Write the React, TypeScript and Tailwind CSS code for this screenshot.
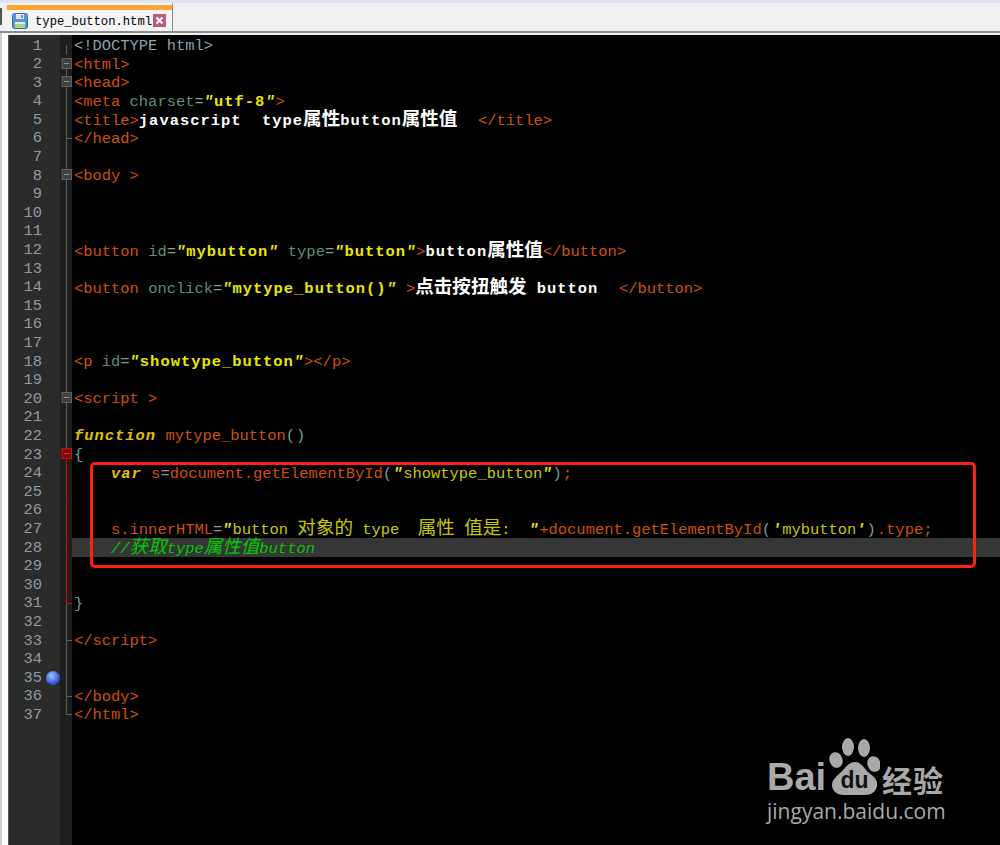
const COLORS = {
  doc: "text-[#8fa3ad]",
  tag: "text-[#d05200]",
  attr: "text-[#5f8f72]",
  eq: "text-[#7f9f8f]",
  val: "text-[#e8e800] font-bold tracking-[1px]",
  quote: "text-[#e8e800] font-bold italic tracking-[1px]",
  txt: "text-white font-bold tracking-[1px]",
  kw: "text-[#e0c000] font-bold italic tracking-[1px]",
  punct: "text-[#6f9f9f] tracking-[1px]",
  str: "text-[#c8c800]",
  cm: "text-[#00c800] italic",
};

type Kind = keyof typeof COLORS;
type Tok = [Kind, string];

const CODE: Record<number, Tok[]> = {
  1: [["doc", "<!DOCTYPE html>"]],
  2: [["tag", "<html>"]],
  3: [["tag", "<head>"]],
  4: [["tag", "<meta "], ["attr", "charset"], ["eq", "="], ["quote", '"'], ["val", "utf-8"], ["quote", '"'], ["tag", ">"]],
  5: [["tag", "<title>"], ["txt", "javascript  type属性button属性值  "], ["tag", "</title>"]],
  6: [["tag", "</head>"]],
  8: [["tag", "<body >"]],
  12: [["tag", "<button "], ["attr", "id"], ["eq", "="], ["quote", '"'], ["val", "mybutton"], ["quote", '"'], ["attr", " type"], ["eq", "="], ["quote", '"'], ["val", "button"], ["quote", '"'], ["tag", ">"], ["txt", "button属性值"], ["tag", "</button>"]],
  14: [["tag", "<button "], ["attr", "onclick"], ["eq", "="], ["quote", '"'], ["val", "mytype_button()"], ["quote", '"'], ["tag", " >"], ["txt", "点击按扭触发 button  "], ["tag", "</button>"]],
  18: [["tag", "<p "], ["attr", "id"], ["eq", "="], ["quote", '"'], ["val", "showtype_button"], ["quote", '"'], ["tag", "></p>"]],
  20: [["tag", "<script >"]],
  22: [["kw", "function"], ["tag", " mytype_button"], ["punct", "()"]],
  23: [["punct", "{"]],
  24: [["tag", "    "], ["kw", "var"], ["tag", " s"], ["eq", "="], ["tag", "document.getElementById"], ["punct", "("], ["quote", '"'], ["str", "showtype_button"], ["quote", '"'], ["punct", ")"], ["tag", ";"]],
  27: [["tag", "    s.innerHTML"], ["eq", "="], ["quote", '"'], ["str", "button 对象的 type  属性 值是:  "], ["quote", '"'], ["tag", "+document.getElementById"], ["punct", "("], ["quote", "'"], ["str", "mybutton"], ["quote", "'"], ["punct", ")"], ["tag", ".type;"]],
  28: [["cm", "    //获取type属性值button"]],
  31: [["punct", "}"]],
  33: [["tag", "</script>"]],
  36: [["tag", "</body>"]],
  37: [["tag", "</html>"]],
};

const LINES = Array.from({ length: 37 }, (_, i) => i + 1);
const CJK_LINES = [5, 12, 14, 27, 28];
const FOLD_BOX = [2, 3, 8, 20];
const FOLD_TICK = [6, 33, 36, 37];

function Run({ kind, text }: { kind: Kind; text: string }) {
  const parts = text.split(/([\u4e00-\u9fff]+)/);
  return (
    <span className={COLORS[kind]}>
      {parts.map((p, i) =>
        i % 2 === 1 ? (
          <span key={i} className="text-[18.54px] leading-[0] tracking-normal font-['Noto_Sans_CJK_SC',sans-serif]">
            {p}
          </span>
        ) : (
          p
        ),
      )}
    </span>
  );
}

function FoldMark({ line }: { line: number }) {
  const red = line >= 23 && line <= 31;
  const c = red ? "#f00000" : "#606060";
  const box = FOLD_BOX.includes(line) || line === 23;
  return (
    <svg viewBox="0 0 12 18.6" className="block h-[18.6px] w-[12px]">
      {line > 2 && <line x1="6.5" y1="0" x2="6.5" y2="9.5" stroke={line === 23 ? "#606060" : c} />}
      {line < 37 && <line x1="6.5" y1="9.3" x2="6.5" y2="18.6" stroke={line === 31 ? "#606060" : c} />}
      {(FOLD_TICK.includes(line) || line === 31) && <line x1="6.5" y1="9.5" x2="12" y2="9.5" stroke={c} />}
      {box && (
        <g>
          <rect x="2" y="3.5" width="9.5" height="10" fill={red ? "#701010" : "#404040"} stroke={c} />
          <line x1="4" y1="8.5" x2="9.5" y2="8.5" stroke={red ? "#ff3030" : "#909090"} />
        </g>
      )}
    </svg>
  );
}

function FloppyIcon() {
  return (
    <svg viewBox="0 0 16 16" className="h-[16px] w-[16px]">
      <rect x="0.5" y="0.5" width="15" height="15" rx="2" fill="#5b93d8" stroke="#3f6fb0" />
      <rect x="4" y="1" width="8" height="5" fill="#dfe9f5" />
      <rect x="9" y="2" width="2" height="3" fill="#5b93d8" />
      <rect x="3" y="9" width="10" height="6" fill="#a6d38c" />
      <rect x="3" y="9" width="10" height="2" fill="#e8f2e0" />
    </svg>
  );
}

function CloseIcon() {
  return (
    <svg viewBox="0 0 13 13" className="ml-[1px] h-[13px] w-[13px]">
      <rect width="13" height="13" fill="#b5607a" />
      <path d="M3.5 3.5l6 6M9.5 3.5l-6 6" stroke="#fff" strokeWidth="2" />
    </svg>
  );
}

function Watermark() {
  return (
    <div className="absolute left-[767px] top-[736px] flex w-[190px] flex-col text-[#a9a9a9]">
      <div className="flex h-[62px]">
        <span className="mt-[21px] w-[61px] text-[38px] leading-[40px] font-bold font-['Liberation_Sans',sans-serif]">Bai</span>
        <svg viewBox="0 0 52 62" className="h-[62px] w-[52px]">
          <ellipse cx="20" cy="11" rx="6" ry="9" fill="#a9a9a9" />
          <ellipse cx="36" cy="12" rx="6" ry="9" fill="#a9a9a9" />
          <ellipse cx="8" cy="24" rx="6.5" ry="8" fill="#a9a9a9" transform="rotate(-20 8 24)" />
          <ellipse cx="46" cy="28" rx="6.5" ry="8" fill="#a9a9a9" transform="rotate(-20 46 28)" />
          <path d="M27 26C34 26 36 33 41 37C47 41 50 45 49 50C48 56 43 59 37 59L16 59C9 59 4 55 4 49C4 44 8 41 12 37C17 33 20 26 27 26Z" fill="#a9a9a9" />
          <text x="26.5" y="52" textAnchor="middle" fontSize="23" fontWeight="700" fontFamily="Liberation Sans" fill="#111">du</text>
        </svg>
        <span className="ml-[2px] mt-[25px] text-[30px] leading-[36px] font-bold tracking-[1px] font-['Noto_Sans_CJK_SC',sans-serif]">经验</span>
      </div>
      <span className="mt-[1px] whitespace-nowrap text-[21px] leading-[24px] font-['Open_Sans',sans-serif]">jingyan.baidu.com</span>
    </div>
  );
}

export default function App() {
  return (
    <div className="relative flex h-[845px] w-[1000px] flex-col overflow-hidden bg-[#f0f0f0] font-['Liberation_Mono',monospace]">
      <div className="h-[3px] bg-[#dfe3f1]" />
      {/* tab bar */}
      <div className="flex h-[30px] border-b-[2px] border-[#8c8c8c]">
        <div className="mt-[5px] h-[17px] w-[2px] bg-[#555]" />
        <div className="ml-[5px] flex h-[28px] w-[166px] flex-col border-r border-[#8c8c8c] bg-[#f4f4f4]">
          <div className="mt-[2px] h-[5px] bg-[#fba534]" />
          <div className="flex flex-1 items-center pl-[5px]">
            <FloppyIcon />
            <span className="ml-[7px] pt-[3px] text-[12.2px] leading-none text-black">type_button.html</span>
            <CloseIcon />
          </div>
        </div>
      </div>
      <div className="flex flex-1">
        <div className="w-[8px] shrink-0 border-l-[2px] border-[#cfcfcf] bg-white" />
        <div className="mt-[2px] flex flex-1 overflow-hidden border-l border-[#555]">
          {/* line numbers */}
          <div className="w-[51px] shrink-0 bg-[#2b2b2b] pt-[1px] text-[15.45px] text-[#8b9ba6]">
            {LINES.map((n) => (
              <div key={n} className="flex h-[18.6px] items-center pt-[1px] leading-[18.6px]">
                <span className="w-[33px] text-right">{n}</span>
                {n === 35 && (
                  <span className="ml-[4px] h-[14px] w-[14px] rounded-full bg-[radial-gradient(circle_at_40%_35%,#a8c4ff,#3358d8_60%,#1c3aa8)]" />
                )}
              </div>
            ))}
          </div>
          {/* fold margin */}
          <div className="w-[12px] shrink-0 bg-[#1f1f1f] pt-[1px]">
            {LINES.map((n) => (
              <FoldMark key={n} line={n} />
            ))}
          </div>
          {/* code */}
          <div className="flex-1 bg-black pt-[1px] text-[15.45px]">
            {LINES.map((n) => (
              <div
                key={n}
                className={`h-[18.6px] whitespace-pre pl-[2px] leading-[18.6px] ${CJK_LINES.includes(n) ? "pt-[2px]" : "pt-[1px]"} ${n === 28 ? "bg-[#363636]" : ""}`}
              >
                {(CODE[n] || []).map(([kind, text], i) => (
                  <Run key={i} kind={kind} text={text} />
                ))}
              </div>
            ))}
          </div>
        </div>
      </div>
      {/* annotation box */}
      <div className="absolute left-[90px] top-[462px] h-[106px] w-[886px] rounded-[5px] border-[3px] border-[#ff1e12]" />
      <Watermark />
    </div>
  );
}
